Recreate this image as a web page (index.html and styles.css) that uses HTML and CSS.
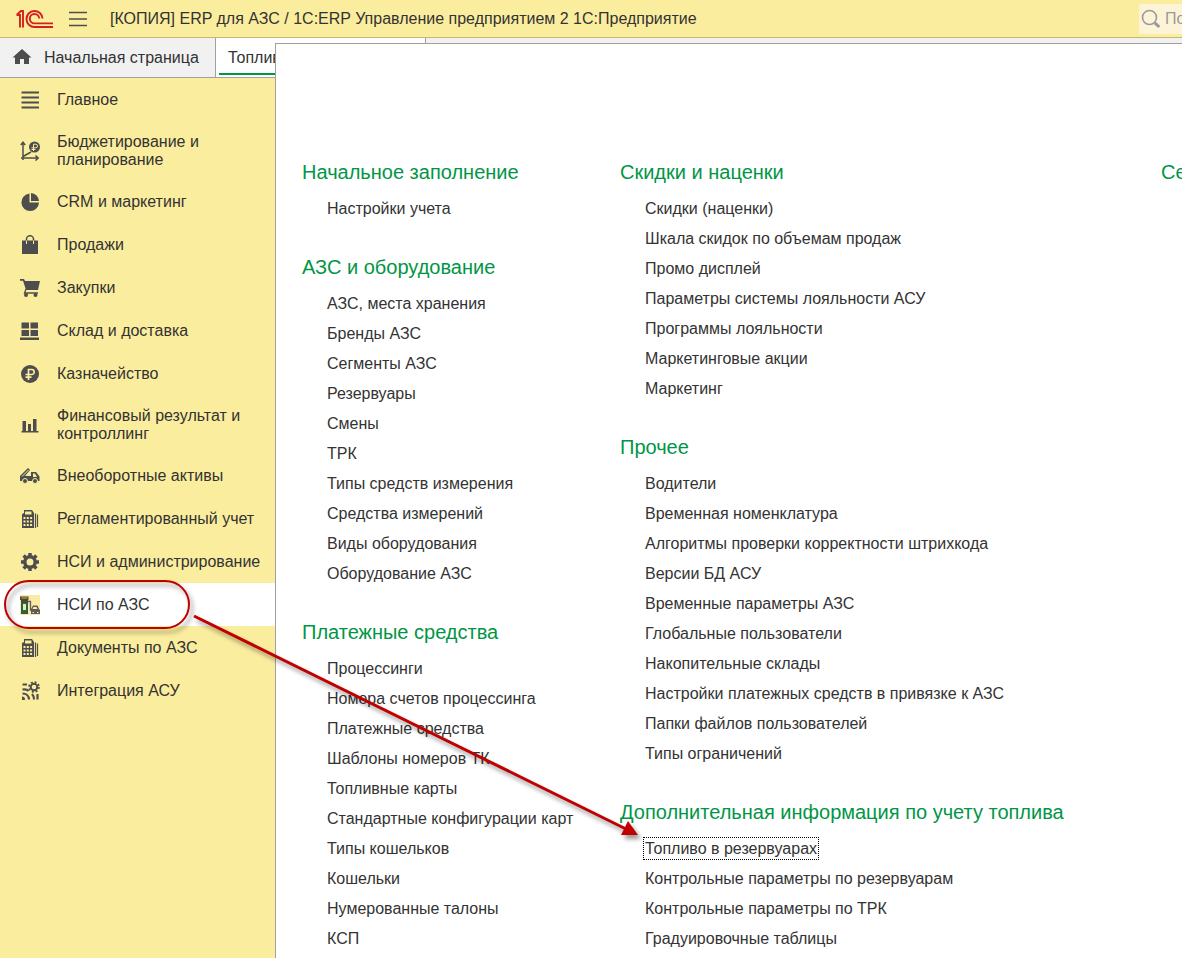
FILE: index.html
```html
<!DOCTYPE html>
<html lang="ru">
<head>
<meta charset="utf-8">
<title>ERP для АЗС</title>
<link rel="stylesheet" href="styles.css">
</head>
<body>
<svg class="defs" aria-hidden="true">
  <symbol id="i-terminal" viewBox="0 0 20 20">
    <path fill="currentColor" fill-rule="evenodd" d="M4 1h8l2 3V19H2V5l2-1zM5 2.500v3h6.500v-3zM3.500 8v2h2V8zm3.300 0v2h2V8zm3.300 0v2h2V8zM3.500 11.500v2h2v-2zm3.300 0v2h2v-2zm3.300 0v2h2v-2zM3.500 15v2h2v-2zm3.300 0v2h2v-2zm3.300 0v2h2v-2z"/>
    <path stroke="currentColor" stroke-width="1.200" d="M15.500 4.500V19M17.500 5.500V18"/>
  </symbol>
</svg>

<header class="topbar">
  <svg class="logo" viewBox="0 0 37 18" role="img" aria-label="1С">
    <g fill="none" stroke="#d6201f" stroke-width="1.900">
      <path d="M0.500 5H4V17.500M0.800 4.800L5 1H7V17.500"/>
      <path d="M26.500 8.500A8 8 0 1 0 18.500 17H37"/>
      <path d="M23.200 8.500A4.700 4.700 0 1 0 18.500 13.400H37"/>
    </g>
  </svg>
  <button class="menu-btn" aria-label="Меню">
    <svg viewBox="0 0 18 16"><path stroke="#4d4d4d" stroke-width="1.500" d="M0 1.500h18M0 8h18M0 14.500h18"/></svg>
  </button>
  <h1 class="title">[КОПИЯ] ERP для АЗС / 1С:ERP Управление предприятием 2 1С:Предприятие</h1>
  <label class="search">
    <svg viewBox="0 0 20 20" aria-hidden="true"><circle cx="8.500" cy="8.500" r="7" fill="none" stroke="#999" stroke-width="1.600"/><path stroke="#999" stroke-width="3" d="M13.800 13.800l4.500 4.200"/></svg>
    <input type="text" placeholder="По" aria-label="Поиск">
  </label>
</header>

<nav class="tabs">
  <a class="tab tab-home" href="#">
    <svg viewBox="0 0 20 18" aria-hidden="true"><path fill="#4d4d4d" d="M10 0l9.500 8.500H17V15h-5v-5H8v5H3V8.500H.5z"/></svg>
    Начальная страница
  </a>
  <a class="tab tab-active" href="#">Топлив</a>
</nav>

<div class="workspace">
  <nav class="sidebar">
    <a class="section" href="#"><svg viewBox="0 0 20 20"><path stroke="currentColor" stroke-width="2.200" d="M1.500 2.500h17.500M1.500 7.500h17.500M1.500 12.500h17.500M1.500 17.500h17.500"/></svg><span>Главное</span></a>
    <a class="section" href="#"><svg viewBox="0 0 20 20"><g fill="none" stroke="currentColor" stroke-width="1.500"><path d="M3 19V2M0.800 4L3 1.300 5.200 4M1 17h17M15.500 14.500l2.700 2.500-2.700 2.500M3 15.500L11 11"/></g><circle cx="14.500" cy="6" r="5.500" fill="currentColor"/><path d="M13.500 10V3.200h2.200a1.700 1.700 0 0 1 0 3.600H11.500M11.500 8.500h4" fill="none" stroke="#fbed9e"/></svg><span>Бюджетирование и планирование</span></a>
    <a class="section" href="#"><svg viewBox="0 0 20 20"><path fill="currentColor" d="M9.500 1.500V10.500h9.500A8.800 8.800 0 1 1 9.500 1.500z"/><path fill="currentColor" d="M11 1a8.500 8.500 0 0 1 8 8h-8z"/></svg><span>CRM и маркетинг</span></a>
    <a class="section" href="#"><svg viewBox="0 0 20 20"><path fill="currentColor" d="M2 5.500h16V19H2z"/><path fill="none" stroke="currentColor" stroke-width="1.500" d="M6.500 6V4a3.500 3.200 0 0 1 7 0v2"/><path fill="none" stroke="#fbed9e" d="M6.500 5.500V9M13.500 5.500V9"/></svg><span>Продажи</span></a>
    <a class="section" href="#"><svg viewBox="0 0 20 20"><path fill="currentColor" d="M0 1h4l1 2h15l-2 9H6L3 2.800H0z"/><path fill="none" stroke="currentColor" stroke-width="1.300" d="M6 11l-1.500 4H18"/><circle cx="6" cy="17" r="2" fill="currentColor"/><circle cx="15.500" cy="17" r="2" fill="currentColor"/></svg><span>Закупки</span></a>
    <a class="section" href="#"><svg viewBox="0 0 20 20"><path fill="currentColor" d="M1.500 1.500h7.500v6H1.500zM10.500 1.500H18v6h-7.500zM1.500 9H9v6H1.500zM10.500 9H18v6h-7.500zM0 16.500h19V19H0z"/></svg><span>Склад и доставка</span></a>
    <a class="section" href="#"><svg viewBox="0 0 20 20"><circle cx="10" cy="10" r="9" fill="currentColor"/><path fill="none" stroke="#fbed9e" stroke-width="1.700" d="M8.500 16V5.500h3.200a2.500 2.500 0 0 1 0 5H5.500M5.500 13.200h6"/></svg><span>Казначейство</span></a>
    <a class="section" href="#"><svg viewBox="0 0 20 20"><path fill="currentColor" d="M2.500 6h3.500v10.500H2.500zM8 9h3v7.500H8zM13 4h3.500v12.500H13zM1.500 16h17v1.500h-17z"/></svg><span>Финансовый результат и контроллинг</span></a>
    <a class="section" href="#"><svg viewBox="0 0 20 20"><path fill="currentColor" fill-rule="evenodd" d="M0 10l8-8 2 2-5 6h6V6h5l3.500 4.500V15H0zM13 7.500V11h4l-2-3.500z"/><path stroke="#fbed9e" d="M2 10.500L8.500 4"/><g fill="currentColor" stroke="#fbed9e"><circle cx="5" cy="15" r="2.500"/><circle cx="15" cy="15" r="2.500"/></g></svg><span>Внеоборотные активы</span></a>
    <a class="section" href="#"><svg><use href="#i-terminal"/></svg><span>Регламентированный учет</span></a>
    <a class="section" href="#"><svg viewBox="0 0 20 20"><circle cx="10" cy="10" r="5.200" fill="none" stroke="currentColor" stroke-width="3.400"/><path stroke="currentColor" stroke-width="3.500" d="M10 1v3M10 16v3M1 10h3M16 10h3M3.600 3.600l2 2M14.400 14.400l2 2M3.600 16.400l2-2M14.400 5.600l2-2"/></svg><span>НСИ и администрирование</span></a>
    <a class="section section-active" href="#" aria-current="true"><svg viewBox="0 0 20 20"><path fill="#fbe9a5" d="M0 0h20v20H0z"/><path fill="#4a4a2c" d="M0 1.500h8.500V5H8v14H1V5H0z"/><path fill="#96763a" d="M1.500 2h6v2h-6z"/><path fill="#1f6b45" d="M1.500 7.500h6V18h-6z"/><path fill="#e6e8c8" d="M3 9h3v6H3z"/><path fill="none" stroke="#5a5f6a" stroke-width="1.300" d="M8 6.500h2.500V15h2"/><path fill="#5c5c5c" fill-rule="evenodd" d="M11 14l2-3.500h4.500L19 14l1 1v4h-9zM13.500 12l-1 2h5l-1-2z"/><path fill="#fbe9a5" d="M12.500 17h1.500v1h-1.500zM17 17h1.500v1H17z"/></svg><span>НСИ по АЗС</span></a>
    <a class="section" href="#"><svg><use href="#i-terminal"/></svg><span>Документы по АЗС</span></a>
    <a class="section" href="#"><svg viewBox="0 0 20 20"><circle cx="14" cy="6" r="3.300" fill="none" stroke="currentColor" stroke-width="2"/><circle cx="14" cy="6" r="5" fill="none" stroke="currentColor" stroke-width="1.600" stroke-dasharray="2 1.930"/><path fill="none" stroke="currentColor" stroke-width="2.200" d="M2.500 3.500H7M2.500 8.500c2.500 0 4.500-.5 6 1.500M2.500 12.500c4 0 6.500 2.500 6.500 6M12 13c1.500 1.500 2 3 2 5.500M17.500 13v5.500"/><path fill="currentColor" d="M2 15.500a3 3 0 0 1 3 3.500H2z"/></svg><span>Интеграция АСУ</span></a>
  </nav>

  <main class="flyout">
    <div class="column">
      <section class="group"><h2>Начальное заполнение</h2>
        <ul><li><a href="#">Настройки учета</a></li></ul></section>
      <section class="group"><h2>АЗС и оборудование</h2>
        <ul><li><a href="#">АЗС, места хранения</a></li><li><a href="#">Бренды АЗС</a></li><li><a href="#">Сегменты АЗС</a></li><li><a href="#">Резервуары</a></li><li><a href="#">Смены</a></li><li><a href="#">ТРК</a></li><li><a href="#">Типы средств измерения</a></li><li><a href="#">Средства измерений</a></li><li><a href="#">Виды оборудования</a></li><li><a href="#">Оборудование АЗС</a></li></ul></section>
      <section class="group"><h2>Платежные средства</h2>
        <ul><li><a href="#">Процессинги</a></li><li><a href="#">Номера счетов процессинга</a></li><li><a href="#">Платежные средства</a></li><li><a href="#">Шаблоны номеров ТК</a></li><li><a href="#">Топливные карты</a></li><li><a href="#">Стандартные конфигурации карт</a></li><li><a href="#">Типы кошельков</a></li><li><a href="#">Кошельки</a></li><li><a href="#">Нумерованные талоны</a></li><li><a href="#">КСП</a></li></ul></section>
    </div>
    <div class="column">
      <section class="group"><h2>Скидки и наценки</h2>
        <ul><li><a href="#">Скидки (наценки)</a></li><li><a href="#">Шкала скидок по объемам продаж</a></li><li><a href="#">Промо дисплей</a></li><li><a href="#">Параметры системы лояльности АСУ</a></li><li><a href="#">Программы лояльности</a></li><li><a href="#">Маркетинговые акции</a></li><li><a href="#">Маркетинг</a></li></ul></section>
      <section class="group"><h2>Прочее</h2>
        <ul><li><a href="#">Водители</a></li><li><a href="#">Временная номенклатура</a></li><li><a href="#">Алгоритмы проверки корректности штрихкода</a></li><li><a href="#">Версии БД АСУ</a></li><li><a href="#">Временные параметры АЗС</a></li><li><a href="#">Глобальные пользователи</a></li><li><a href="#">Накопительные склады</a></li><li><a href="#">Настройки платежных средств в привязке к АЗС</a></li><li><a href="#">Папки файлов пользователей</a></li><li><a href="#">Типы ограничений</a></li></ul></section>
      <section class="group"><h2>Дополнительная информация по учету топлива</h2>
        <ul><li><a class="focused" href="#">Топливо в резервуарах</a></li><li><a href="#">Контрольные параметры по резервуарам</a></li><li><a href="#">Контрольные параметры по ТРК</a></li><li><a href="#">Градуировочные таблицы</a></li></ul></section>
    </div>
    <div class="column">
      <section class="group"><h2>Се</h2></section>
    </div>
  </main>
</div>

<svg class="annotation" width="660" height="860" aria-hidden="true">
  <rect x="5" y="581" width="184" height="47" rx="23.500" fill="none" stroke="#c00000" stroke-width="2"/>
  <path d="M194 616L626 829" stroke="#c00000" stroke-width="3"/>
  <path d="M638 835l-10-14-7 14z" fill="#c00000"/>
</svg>
</body>
</html>
```
FILE: styles.css
```css
* { box-sizing: border-box; }

body {
  position: relative;
  display: flex;
  flex-direction: column;
  min-height: 100vh;
  margin: 0;
  overflow: hidden;
  background: #fff;
  color: #333;
  font: 16px/18px "Liberation Sans", Arial, sans-serif;
}

a { color: inherit; text-decoration: none; }
.defs { position: absolute; width: 0; height: 0; }

.topbar {
  display: flex;
  align-items: center;
  height: 38px;
  padding-left: 16px;
  background: #fbed9e;
  border-bottom: 1px solid #c5b870;
}
.logo { flex: none; width: 37px; height: 18px; }
.menu-btn {
  flex: none;
  width: 18px;
  height: 16px;
  margin: 0 23px 0 16px;
  padding: 0;
  border: 0;
  background: none;
}
.menu-btn svg { display: block; width: 18px; height: 16px; }
.title { flex: 1; margin: 0; font-size: 16px; font-weight: 400; white-space: nowrap; }
.search {
  display: flex;
  flex: none;
  align-items: center;
  gap: 4px;
  width: 43px;
  height: 30px;
  padding-left: 2px;
  overflow: hidden;
  background: #fdf4d7;
}
.search svg { flex: none; width: 20px; height: 20px; }
.search input {
  width: 100px;
  padding: 0;
  border: 0;
  outline: 0;
  background: none;
  font: inherit;
}
.search input::placeholder { color: #999; opacity: 1; }

.tabs {
  display: flex;
  height: 40px;
  background: #f1f1f1;
  border-bottom: 1px solid #a0a0a0;
}
.tab { display: flex; align-items: center; border-right: 1px solid #a0a0a0; }
.tab-home { gap: 12px; width: 216px; padding-left: 12px; }
.tab-home svg { width: 20px; height: 18px; }
.tab-active {
  width: 210px;
  padding: 0 9px;
  border-left: 3px solid #fff;
  background: linear-gradient(#009646, #009646) 0 35px / 100% 2px no-repeat #fff;
}

.workspace { display: flex; flex: 1; }

.sidebar { flex: none; width: 275px; background: #fbed9e; }
.section {
  display: flex;
  align-items: center;
  gap: 17px;
  min-height: 43px;
  padding: 12px 8px 11px 20px;
}
.section svg { flex: none; width: 20px; height: 20px; margin: -1px 0; color: #4d4d4d; }
.section-active { background: #fff; }

.flyout {
  position: relative;
  display: grid;
  flex: 1;
  grid-template-columns: 318px 541px 1fr;
  min-width: 0;
  margin-top: -35px;
  padding: 116px 0 0 26px;
  overflow: hidden;
  background: #fff;
  border: solid #a0a0a0;
  border-width: 1px 0 0 1px;
}
.column { display: flex; flex-direction: column; gap: 31px; min-width: 0; }
.group h2 {
  margin: 0 0 10px;
  color: #009646;
  font-size: 20px;
  font-weight: 400;
  line-height: 24px;
  white-space: nowrap;
}
.group ul { margin: 0; padding: 0 0 0 25px; list-style: none; }
.group li { line-height: 30px; white-space: nowrap; }
.focused { padding: 1px 0; outline: 1px dotted #000; outline-offset: 1px; }

.annotation {
  position: absolute;
  top: 0;
  left: 0;
  pointer-events: none;
  filter: drop-shadow(3px 4px 2px rgba(0, 0, 0, 0.4));
}
```
